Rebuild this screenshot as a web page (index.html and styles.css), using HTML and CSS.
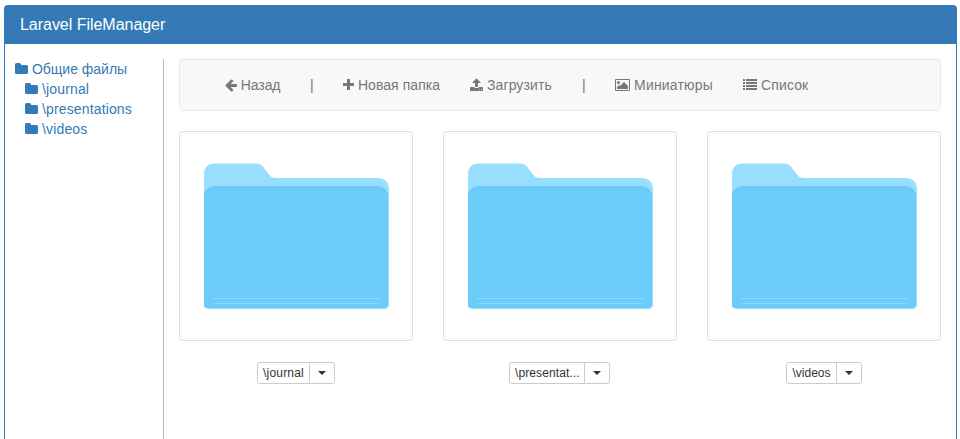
FILE: index.html
```html
<!DOCTYPE html>
<html lang="ru">
<head>
<meta charset="utf-8">
<title>Laravel FileManager</title>
<link rel="stylesheet" href="styles.css">
</head>
<body>
<svg class="defs" aria-hidden="true">
  <symbol id="folder" viewBox="0 0 13 14"><path d="M1.500 1H4.500Q6 1 6 2.500V3H11.500Q13 3 13 4.500V10.500Q13 12 11.500 12H1.500Q0 12 0 10.500V2.500Q0 1 1.500 1Z"/></symbol>
  <symbol id="picture" viewBox="0 0 186 147">
    <path fill="#98deff" d="M0 24V11Q0 1 10 0.500H52Q57 0.500 60 5L66 13Q68 15 72 15H175Q184 16 185 25V45H0Z"/>
    <path fill="#6bccfa" d="M0 32Q1 24 9 23H175Q183 24 184 32V142Q184 145.500 180 145.500H4Q0 145.500 0 142Z"/>
    <path fill="none" stroke="#98deff" d="M184.500 30V141Q184.500 145.500 180.500 145.500H4"/>
    <path fill="none" stroke="#8ad8fd" d="M9 135.500H176M9 140.500H176"/>
  </symbol>
</svg>
<div class="panel">
  <header class="title">Laravel FileManager</header>
  <div class="body">
    <nav class="tree">
      <a><svg class="i w13"><use href="#folder"/></svg> Общие файлы</a>
      <a class="child"><svg class="i w13"><use href="#folder"/></svg> \journal</a>
      <a class="child"><svg class="i w13"><use href="#folder"/></svg> \presentations</a>
      <a class="child"><svg class="i w13"><use href="#folder"/></svg> \videos</a>
    </nav>
    <main>
      <div class="toolbar">
        <a class="back"><svg class="i w12" viewBox="128 0 1536 1792"><path d="M1664 896v128q0 53-32.5 90.5t-84.5 37.500h-704l293 294q38 36 38 90t-38 90l-75 76q-37 37-90 37-52 0-91-37l-651-652q-37-37-37-90 0-52 37-91l651-650q38-38 91-38 52 0 90 38l75 74q38 38 38 91t-38 91l-293 293h704q52 0 84.500 37.500t32.500 90.500z"/></svg> Назад</a>
        <a class="bar">|</a>
        <a class="new"><svg class="i w11" viewBox="0 0 11 14"><path d="M4 1H7V5H11V8H7V12H4V8H0V5H4Z"/></svg> Новая папка</a>
        <a class="upload"><svg class="i w13" viewBox="64 0 1664 1792"><path d="M1344 1472q0-26-19-45t-45-19-45 19-19 45 19 45 45 19 45-19 19-45zm256 0q0-26-19-45t-45-19-45 19-19 45 19 45 45 19 45-19 19-45zm128-224v320q0 40-28 68t-68 28h-1472q-40 0-68-28t-28-68v-320q0-40 28-68t68-28h427q21 56 70.500 92t110.500 36h256q61 0 110.500-36t70.500-92h427q40 0 68 28t28 68zm-325-648q-17 40-59 40h-256v448q0 26-19 45t-45 19h-256q-26 0-45-19t-19-45v-448h-256q-42 0-59-40-17-39 14-69l448-448q18-19 45-19t45 19l448 448q31 30 14 69z"/></svg> Загрузить</a>
        <a class="bar">|</a>
        <a class="thumbs"><svg class="i w15" viewBox="0 0 15 14"><path fill-rule="evenodd" d="M1 1H14Q15 1 15 2V12Q15 13 14 13H1Q0 13 0 12V2Q0 1 1 1ZM1 2V12H14V2Z"/><circle cx="3.500" cy="4.500" r="1.500"/><path d="M2 11V9L4 7L5 8L9 4L13 8V11Z"/></svg> Миниатюры</a>
        <a class="list"><svg class="i w14" viewBox="0 0 14 14"><path d="M0 1H2V3H0ZM3 1H14V3H3ZM0 4H2V6H0ZM3 4H14V6H3ZM0 7H2V9H0ZM3 7H14V9H3ZM0 10H2V12H0ZM3 10H14V12H3Z"/></svg> Список</a>
      </div>
      <div class="grid">
        <div class="item"><div class="thumb"><svg class="picture"><use href="#picture"/></svg></div>
          <div class="group"><button class="name journal">\journal</button><button class="toggle"><span class="caret"></span></button></div></div>
        <div class="item"><div class="thumb"><svg class="picture"><use href="#picture"/></svg></div>
          <div class="group shifted"><button class="name long">\presentat...</button><button class="toggle"><span class="caret"></span></button></div></div>
        <div class="item"><div class="thumb"><svg class="picture"><use href="#picture"/></svg></div>
          <div class="group"><button class="name videos">\videos</button><button class="toggle"><span class="caret"></span></button></div></div>
      </div>
    </main>
  </div>
</div>
</body>
</html>
```
FILE: styles.css
```css
* { box-sizing: border-box; }
html, body { height: 100%; overflow: hidden; }
body { margin: 0; padding: 5px 3px 0 4px; background: #fff; font: 14px/20px "Liberation Sans", Arial, sans-serif; color: #333; }
.defs { display: none; }
.panel { height: 434px; border: 1px solid #337ab7; border-bottom: 0; border-radius: 4px 4px 0 0; background: #fff; }
.title { height: 38px; padding: 10px 15px; background: #337ab7; color: #fff; font-size: 16px; line-height: 18px; letter-spacing: -0.03px; }
.body { display: flex; height: 395px; padding: 15px 15px 0 10px; }
.tree { width: 149px; border-right: 1px solid #bbb; color: #337ab7; }
.tree a { display: block; white-space: nowrap; }
.tree .child { padding-left: 10px; letter-spacing: 0.14px; }
.i { height: 14px; vertical-align: -2px; fill: currentColor; }
.w11 { width: 11px; }
.w12 { width: 12px; }
.w13 { width: 13px; }
.w14 { width: 14px; }
.w15 { width: 15px; }
main { flex: 1; margin-left: 15px; }
.toolbar { display: flex; height: 52px; padding: 15px 30px; border: 1px solid #e7e7e7; border-radius: 4px; background: #f8f8f8; color: #777; white-space: nowrap; }
.toolbar a { flex: none; padding-left: 15px; }
.toolbar .back { width: 85px; letter-spacing: -0.1px; }
.toolbar .bar { width: 33px; padding-left: 15px; }
.toolbar .new { width: 127px; letter-spacing: 0.05px; }
.toolbar .upload { width: 112px; letter-spacing: 0.1px; }
.toolbar .thumbs { width: 128px; letter-spacing: 0.17px; }
.toolbar .list { letter-spacing: 0.12px; }
.grid { display: grid; grid-template-columns: repeat(3, 1fr); gap: 30px; margin-top: 20px; }
.item { display: flex; flex-direction: column; align-items: center; }
.thumb { width: 100%; height: 210px; padding: 31px 0 0 24px; border: 1px solid #ddd; border-radius: 4px; }
.picture { display: block; width: 186px; height: 147px; }
.group { display: flex; margin-top: 21px; }
.shifted { margin-right: 1px; }
button { height: 22px; margin: 0; padding: 1px 5px; border: 1px solid #ccc; background: #fff; color: #333; font: 12px/18px "Liberation Sans", Arial, sans-serif; }
.name { border-radius: 3px 0 0 3px; }
.journal { width: 53px; letter-spacing: 0.2px; }
.long { width: 76px; letter-spacing: 0.1px; }
.videos { width: 51px; }
.toggle { display: flex; align-items: center; justify-content: center; width: 26px; margin-left: -1px; border-radius: 0 3px 3px 0; }
.caret { border: 4px solid transparent; border-top-color: #333; border-bottom: 0; }
```
